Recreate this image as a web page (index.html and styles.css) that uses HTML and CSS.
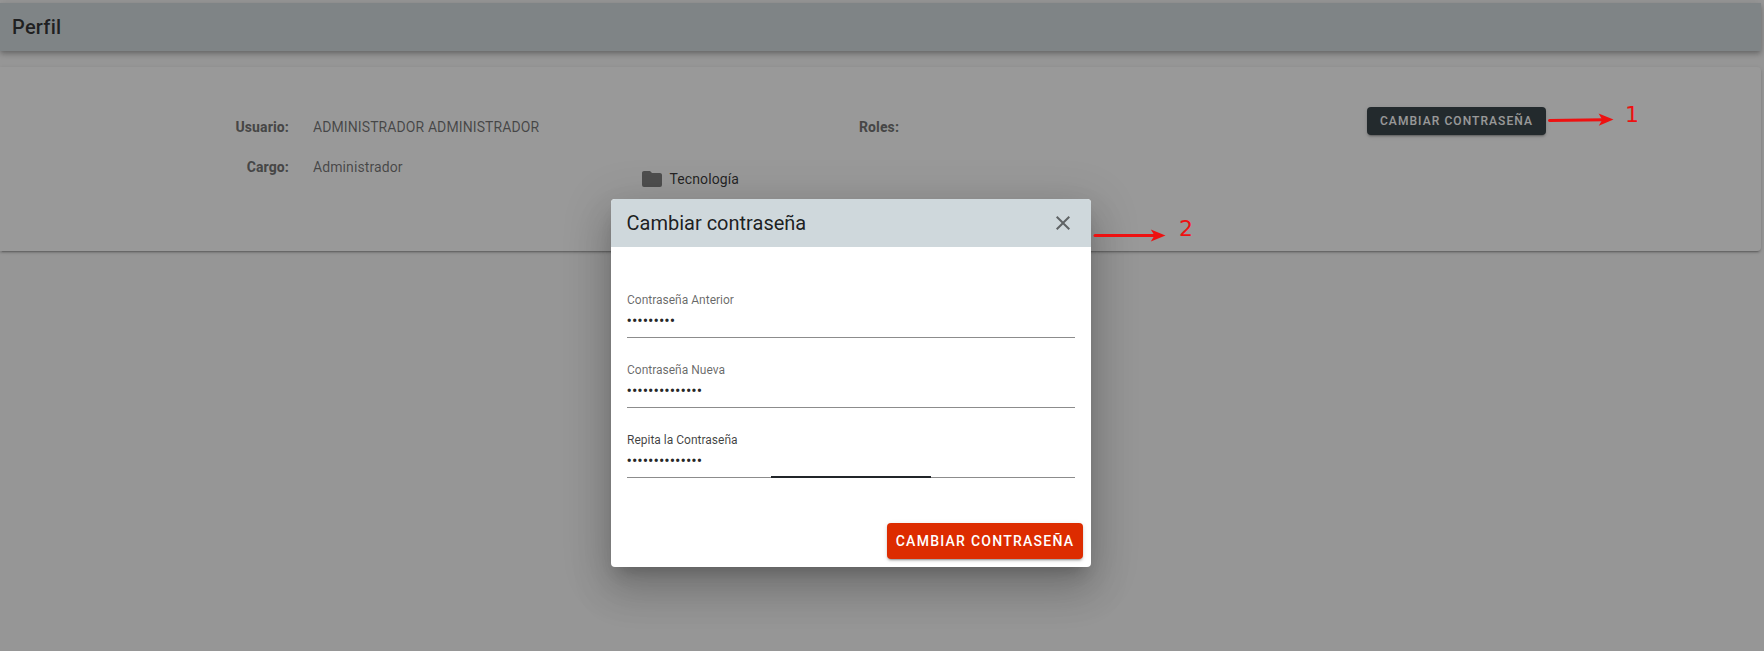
FILE: index.html
```html
<!DOCTYPE html>
<html lang="es">
<head>
<meta charset="utf-8">
<title>Perfil</title>
<link rel="stylesheet" href="styles.css">
</head>
<body>
<main class="page">
  <header class="toolbar"><h1 class="toolbar-title">Perfil</h1></header>
  <section class="card">
    <dl class="details">
      <dt>Usuario:</dt><dd>ADMINISTRADOR ADMINISTRADOR</dd>
      <dt>Cargo:</dt><dd>Administrador</dd>
    </dl>
    <div class="roles">
      <div class="roles-title">Roles:</div>
      <div class="role">
        <svg class="icon-folder" viewBox="0 0 24 24"><path d="M10 4H4c-1.11 0-2 .89-2 2v12a2 2 0 0 0 2 2h16a2 2 0 0 0 2-2V8c0-1.11-.9-2-2-2h-8l-2-2z"/></svg>
        <span>Tecnología</span>
      </div>
    </div>
    <div class="actions"><button class="btn btn-small">CAMBIAR CONTRASEÑA</button></div>
  </section>
</main>
<div class="overlay">
  <form class="dialog">
    <div class="dialog-bar">
      <h2 class="dialog-title">Cambiar contraseña</h2>
      <svg class="icon-close" viewBox="0 0 24 24"><path d="M19 6.41 17.59 5 12 10.59 6.41 5 5 6.41 10.59 12 5 17.59 6.41 19 12 13.41 17.59 19 19 17.59 13.41 12z"/></svg>
    </div>
    <div class="fields">
      <div class="field"><span class="label">Contraseña Anterior</span><span class="dots">•••••••••</span></div>
      <div class="field"><span class="label">Contraseña Nueva</span><span class="dots">••••••••••••••</span></div>
      <div class="field field-focus"><span class="label">Repita la Contraseña</span><span class="dots">••••••••••••••</span></div>
    </div>
    <div class="dialog-actions"><button type="button" class="btn btn-red">CAMBIAR CONTRASEÑA</button></div>
  </form>
</div>
<div class="note note-one">
  <svg class="arrow" viewBox="0 0 74 16"><path class="shaft" d="M4.5 9.6 59 8.8"/><path class="head" d="M68.5 8.4 53.6 2.4 57.3 8.7 53.8 14.8z"/></svg>
  <span class="note-text">1</span>
</div>
<div class="note note-two">
  <svg class="arrow" viewBox="0 0 74 16"><path class="shaft" d="M3 8.5H63"/><path class="head" d="M73.5 8.5 58.8 2.4 62.5 8.5 58.8 14.6z"/></svg>
  <span class="note-text">2</span>
</div>
</body>
</html>
```
FILE: styles.css
```css
* { box-sizing: border-box; }
body { margin: 0; height: 651px; overflow: hidden; background: #fafafa; font-family: Roboto, sans-serif; color: rgba(0,0,0,.87); }
h1, h2, dl, dd { margin: 0; }
.page { padding: 3px 3px 0 0; }
.toolbar { height: 48px; display: flex; align-items: center; padding-left: 12px; background: #cfd8dc; box-shadow: 0 2px 4px -1px rgba(0,0,0,.2), 0 4px 5px rgba(0,0,0,.14), 0 1px 10px rgba(0,0,0,.12); }
.toolbar-title { font-size: 20px; font-weight: 500; line-height: 30px; letter-spacing: .0125em; }
.card { height: 184px; margin-top: 16px; display: grid; grid-template-columns: 640px 478px 1fr; background: #fff; border-radius: 0 4px 4px 0; box-shadow: 0 3px 1px -2px rgba(0,0,0,.2), 0 2px 2px rgba(0,0,0,.14), 0 1px 5px rgba(0,0,0,.12); }
.details { display: grid; grid-template-columns: 289px 1fr; grid-auto-rows: 40px; column-gap: 24px; padding-top: 40px; font-size: 14px; line-height: 40px; letter-spacing: .1px; color: rgba(0,0,0,.6); }
.details dt { text-align: right; font-weight: 800; }
.roles { padding-top: 40px; }
.roles-title { text-align: center; font-size: 14px; font-weight: 800; line-height: 40px; letter-spacing: .1px; color: rgba(0,0,0,.6); }
.role { display: flex; align-items: center; gap: 6px; height: 40px; margin-top: 12px; font-size: 14px; letter-spacing: .1px; }
.icon-folder { width: 24px; height: 24px; margin-left: -.5px; fill: rgba(0,0,0,.54); }
.actions { padding: 40px 0 0 249px; }
.btn { display: block; border: 0; border-radius: 4px; color: #fff; font-family: inherit; font-weight: 500; letter-spacing: .0892857em; white-space: nowrap; box-shadow: 0 3px 1px -2px rgba(0,0,0,.2), 0 2px 2px rgba(0,0,0,.14), 0 1px 5px rgba(0,0,0,.12); }
.btn-small { width: 179px; height: 28px; padding: 0; font-size: 12px; background: #263238; }
.overlay { position: absolute; inset: 0; display: flex; justify-content: center; align-items: flex-start; padding: 199px 62px 0 0; background: rgba(33,33,33,.46); }
.dialog { width: 480px; height: 368px; display: flex; flex-direction: column; background: #fff; border-radius: 4px; overflow: hidden; box-shadow: 0 11px 15px -7px rgba(0,0,0,.2), 0 24px 38px 3px rgba(0,0,0,.14), 0 9px 46px 8px rgba(0,0,0,.12); }
.dialog-bar { height: 48px; display: flex; align-items: center; justify-content: space-between; padding: 0 16.5px 0 15.5px; background: #cfd8dc; }
.dialog-title { font-size: 20px; font-weight: 400; line-height: 30px; }
.icon-close { width: 24px; height: 24px; fill: rgba(0,0,0,.54); }
.fields { padding: 43px 16px 0; display: flex; flex-direction: column; gap: 22px; }
.field { position: relative; height: 48px; display: flex; flex-direction: column; border-bottom: 1px solid #8c8c8c; }
.label { height: 21px; font-size: 12px; line-height: 20px; color: rgba(0,0,0,.6); }
.dots { height: 20px; margin-left: -.5px; font-size: 16px; line-height: 20px; }
.field-focus .label { color: rgba(0,0,0,.75); }
.field-focus::after { content: ""; position: absolute; left: 144px; bottom: -1px; width: 160px; height: 2px; background: #212529; }
.dialog-actions { display: flex; justify-content: flex-end; margin-top: auto; padding: 8px; }
.btn-red { width: 196px; height: 36px; padding: 0; font-size: 14px; background: #dd2c00; }
.note { position: absolute; display: flex; color: #ee1111; }
.note-one { left: 1545px; top: 111px; }
.note-two { left: 1092px; top: 227px; }
.arrow { width: 74px; height: 16px; }
.shaft { stroke: #ee1111; stroke-width: 3; stroke-linecap: round; }
.head { fill: #ee1111; }
.note-text { font: 22px/26px "DejaVu Sans", sans-serif; }
.note-one .note-text { margin: -9px 0 0 6px; }
.note-two .note-text { margin: -11px 0 0 13px; }
```
